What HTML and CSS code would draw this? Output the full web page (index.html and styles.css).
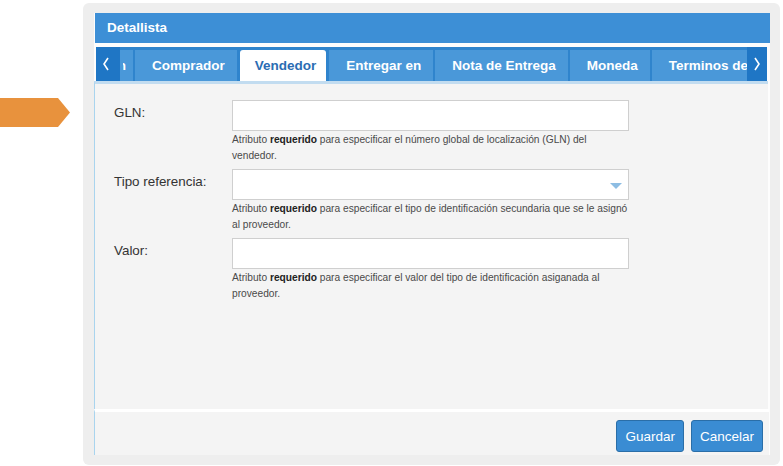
FILE: index.html
```html
<!DOCTYPE html>
<html lang="es">
<head>
<meta charset="utf-8">
<title>Detallista</title>
<link rel="stylesheet" href="styles.css">
</head>
<body>
<div class="page">
  <div class="pointer"></div>
  <div class="dialog">
    <div class="panel">
      <div class="title">Detallista</div>
      <div class="tabbar">
        <div class="nav prev">
          <svg width="8" height="14" viewBox="0 0 8 14"><polyline points="6,1 2,7 6,13" fill="none" stroke="#fff" stroke-width="1.6"/></svg>
        </div>
        <div class="tabs">
          <div class="tab first"><span>en</span></div>
          <div class="tab">Comprador</div>
          <div class="tab active">Vendedor</div>
          <div class="tab">Entregar en</div>
          <div class="tab">Nota de Entrega</div>
          <div class="tab">Moneda</div>
          <div class="tab">Terminos de pago</div>
        </div>
        <div class="nav next">
          <svg width="8" height="14" viewBox="0 0 8 14"><polyline points="2,1 6,7 2,13" fill="none" stroke="#fff" stroke-width="1.6"/></svg>
        </div>
      </div>
      <div class="content">
        <div class="row">
          <div class="label">GLN:</div>
          <div class="field">
            <div class="input"></div>
            <div class="help">Atributo <b>requerido</b> para especificar el número global de localización (GLN) del vendedor.</div>
          </div>
        </div>
        <div class="row">
          <div class="label">Tipo referencia:</div>
          <div class="field">
            <div class="input select"><span class="caret"></span></div>
            <div class="help">Atributo <b>requerido</b> para especificar el tipo de identificación secundaria que se le asignó al proveedor.</div>
          </div>
        </div>
        <div class="row">
          <div class="label">Valor:</div>
          <div class="field">
            <div class="input"></div>
            <div class="help">Atributo <b>requerido</b> para especificar el valor del tipo de identificación asiganada al proveedor.</div>
          </div>
        </div>
      </div>
      <div class="footer">
        <button class="btn">Guardar</button>
        <button class="btn">Cancelar</button>
      </div>
    </div>
  </div>
</div>
</body>
</html>
```

FILE: styles.css
```css
* { box-sizing: border-box; }
html, body { margin: 0; padding: 0; background: #fff; }
body { font-family: "Liberation Sans", Arial, sans-serif; color: #333; }

.page {
  display: flex;
  align-items: flex-start;
  padding-top: 3px;
}

.pointer {
  width: 70px;
  height: 29px;
  margin-top: 95px;
  margin-right: 13px;
  background: #e8923d;
  clip-path: polygon(0 0, 58px 0, 70px 50%, 58px 100%, 0 100%);
  flex: none;
}

.dialog {
  width: 697px;
  height: 462px;
  background: #eeeeee;
  border-radius: 6px;
  padding: 10px 10px 10px 11px;
  flex: none;
}

.panel {
  display: flex;
  flex-direction: column;
  height: 100%;
  background: #fdfdfd;
}

.title {
  height: 30px;
  margin-left: 1px;
  background: #3d8fd6;
  color: #fff;
  font-weight: bold;
  font-size: 13.5px;
  line-height: 30px;
  padding-left: 12px;
}

.tabbar {
  display: flex;
  height: 34px;
  margin: 4px 3px 0 2px;
  background: #2f84cd;
  padding-top: 3px;
}

.nav {
  flex: none;
  display: flex;
  align-items: center;
  justify-content: center;
  background: #1f76c5;
  margin-top: -3px;
}
.nav.prev { width: 24px; justify-content: flex-start; padding-left: 6px; }
.nav.next { width: 20px; }

.tabs {
  flex: 1;
  display: flex;
  gap: 2px;
  overflow: hidden;
  min-width: 0;
}

.tab {
  flex: none;
  background: #4a98d9;
  color: #fff;
  font-weight: bold;
  font-size: 13.5px;
  line-height: 31px;
  padding: 0 12px 0 17px;
  white-space: nowrap;
}
.tab.first {
  width: 13px;
  padding: 0;
  overflow: hidden;
  display: flex;
  justify-content: flex-end;
}
.tab.first span {
  margin-right: 7px;
  clip-path: inset(0 0 0 calc(100% - 3px));
}

.tab.active {
  background: #fff;
  color: #2b6db3;
  border-radius: 3px 3px 0 0;
  padding: 0 10px 0 15px;
  margin: 0 1px;
}

.content {
  flex: 1;
  margin: 0 2px 0 0;
  border-top: 3px solid #c2dcf0;
  border-left: 1px solid #a9d4ee;
  background: #f4f4f4;
  padding: 16px 0 0 19px;
  display: flex;
  flex-direction: column;
  gap: 5px;
}

.row { display: flex; }

.label {
  width: 118px;
  flex: none;
  font-size: 13.4px;
  padding-top: 5px;
  color: #333;
}

.field { width: 397px; }

.input {
  height: 31px;
  background: #fff;
  border: 1px solid #cfcfcf;
  position: relative;
}

.caret {
  position: absolute;
  right: 6px;
  top: 13px;
  width: 0;
  height: 0;
  border-left: 6px solid transparent;
  border-right: 6px solid transparent;
  border-top: 6px solid #8dbde3;
}

.help {
  font-size: 10.2px;
  line-height: 16px;
  color: #4a4a4a;
  padding-top: 1px;
}
.help b { color: #222; }

.footer {
  height: 46px;
  margin-right: 1px;
  border-top: 3px solid #fff;
  border-left: 1px solid #a9d4ee;
  background: #f4f4f4;
  display: flex;
  justify-content: flex-end;
  align-items: flex-start;
  gap: 7px;
  padding: 8px 6px 0 0;
}

.btn {
  height: 32px;
  padding: 0 8px;
  background: #3a8cd3;
  border: 1px solid #2a6ea8;
  border-radius: 3px;
  color: #fff;
  font-family: "Liberation Sans", Arial, sans-serif;
  font-size: 13.5px;
}
```
